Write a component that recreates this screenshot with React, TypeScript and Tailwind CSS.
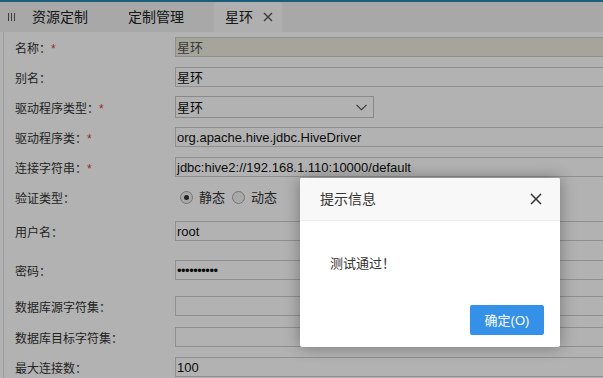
import React from 'react';

type Row = {
  label: string;
  required?: boolean;
  h: string;
  kind: 'input' | 'disabled' | 'select' | 'radio' | 'password';
  value?: string;
};

const rows: Row[] = [
  { label: '名称：', required: true, h: 'h-[30px]', kind: 'disabled', value: '星环' },
  { label: '别名：', h: 'h-[30px]', kind: 'input', value: '星环' },
  { label: '驱动程序类型：', required: true, h: 'h-[30px]', kind: 'select', value: '星环' },
  { label: '驱动程序类：', required: true, h: 'h-[30px]', kind: 'input', value: 'org.apache.hive.jdbc.HiveDriver' },
  { label: '连接字符串：', required: true, h: 'h-[30px]', kind: 'input', value: 'jdbc:hive2://192.168.1.110:10000/default' },
  { label: '验证类型：', h: 'h-[30px]', kind: 'radio' },
  { label: '用户名：', h: 'h-[38px]', kind: 'input', value: 'root' },
  { label: '密码：', h: 'h-[40px]', kind: 'password', value: '••••••••••' },
  { label: '数据库源字符集：', h: 'h-[32px]', kind: 'input', value: '' },
  { label: '数据库目标字符集：', h: 'h-[30px]', kind: 'input', value: '' },
  { label: '最大连接数：', h: 'h-[30px]', kind: 'input', value: '100' },
];

function Field({ row }: { row: Row }) {
  if (row.kind === 'radio') {
    return (
      <div className="flex items-center text-[13px] text-[#333] pl-[5px] shrink-0">
        <span className="w-[13px] h-[13px] rounded-full border border-[#a9a9a9] bg-[#f2f2f2] flex items-center justify-center">
          <span className="w-[5px] h-[5px] rounded-full bg-[#333]" />
        </span>
        <span className="ml-[6px] leading-none">静态</span>
        <span className="ml-[7px] w-[13px] h-[13px] rounded-full border border-[#a9a9a9] bg-[#f2f2f2]" />
        <span className="ml-[6px] leading-none">动态</span>
      </div>
    );
  }
  if (row.kind === 'select') {
    return (
      <div className="w-[199px] h-[22px] shrink-0 border border-[#c6c6c6] bg-white flex items-center justify-between pl-[1px] pr-[6px] text-[13px] text-[#111]">
        <span className="leading-none">{row.value}</span>
        <svg width="11" height="7" viewBox="0 0 11 7" fill="none">
          <path d="M0.5 0.8 L5.5 5.8 L10.5 0.8" stroke="#444" strokeWidth="1.1" />
        </svg>
      </div>
    );
  }
  const disabled = row.kind === 'disabled';
  return (
    <div
      className={`w-[450px] h-[20px] shrink-0 border border-[#cfcfcf] flex items-center pl-[1px] text-[13px] leading-none ${
        disabled ? 'bg-[#ececdf] text-[#555]' : 'bg-white text-[#111]'
      } ${row.kind === 'password' ? 'text-[10px] tracking-[-0.5px]' : ''}`}
    >
      {row.value}
    </div>
  );
}

export default function App() {
  return (
    <div className="relative w-[603px] h-[378px] overflow-hidden bg-white font-[Liberation_Sans,Noto_Sans_CJK_SC,sans-serif]">
      <div className="h-[2px] bg-[#2887b2]" />
      {/* tab bar */}
      <div className="h-[30px] bg-[#f1f1f1] flex items-stretch text-[14px] text-[#222]">
        <div className="w-[20px] flex items-center pl-[8px] gap-[2px]">
          <span className="w-px h-[8px] bg-[#555]" />
          <span className="w-px h-[8px] bg-[#555]" />
          <span className="w-px h-[8px] bg-[#555]" />
        </div>
        <div className="w-[96px] pl-[12px] flex items-center">资源定制</div>
        <div className="w-[98px] pl-[12px] flex items-center">定制管理</div>
        <div className="w-[68px] pl-[11px] bg-[#fbfbfb] flex items-center">
          <span>星环</span>
          <svg className="ml-[10px]" width="10" height="10" viewBox="0 0 10 10">
            <path d="M1 1 L9 9 M9 1 L1 9" stroke="#555" strokeWidth="1.4" />
          </svg>
        </div>
      </div>
      {/* form */}
      <div className="ml-[3px] border-l border-[#e2e2e2] h-full">
        {rows.map((row) => (
          <div key={row.label} className={`flex items-center ${row.h}`}>
            <div className="w-[171px] shrink-0 pl-[11px] pt-[3px] text-[12px] text-[#333] leading-none">
              {row.label}
              {row.required && <span className="text-[#e03a3a]">*</span>}
            </div>
            <Field row={row} />
          </div>
        ))}
      </div>
      {/* mask */}
      <div className="absolute inset-0 bg-black/30" />
      {/* dialog */}
      <div className="absolute left-[300px] top-[178px] w-[260px] h-[169px] bg-white rounded-[2px] shadow-[0_0_16px_rgba(0,0,0,0.35)] flex flex-col">
        <div className="h-[43px] bg-[#f8f8f8] border-b border-[#ececec] flex items-center justify-between pl-[20px] pr-[18px] rounded-t-[2px]">
          <span className="text-[14px] text-[#333]">提示信息</span>
          <svg width="12" height="12" viewBox="0 0 12 12">
            <path d="M1 1 L11 11 M11 1 L1 11" stroke="#333" strokeWidth="1.5" />
          </svg>
        </div>
        <div className="flex-1 pl-[30px] pt-[36px] text-[13px] text-[#333] leading-none">测试通过！</div>
        <div className="flex justify-end pr-[16px] pb-[12px]">
          <button className="w-[74px] h-[30px] bg-[#3591e8] rounded-[2px] text-white text-[13px] leading-none">
            确定(O)
          </button>
        </div>
      </div>
    </div>
  );
}
